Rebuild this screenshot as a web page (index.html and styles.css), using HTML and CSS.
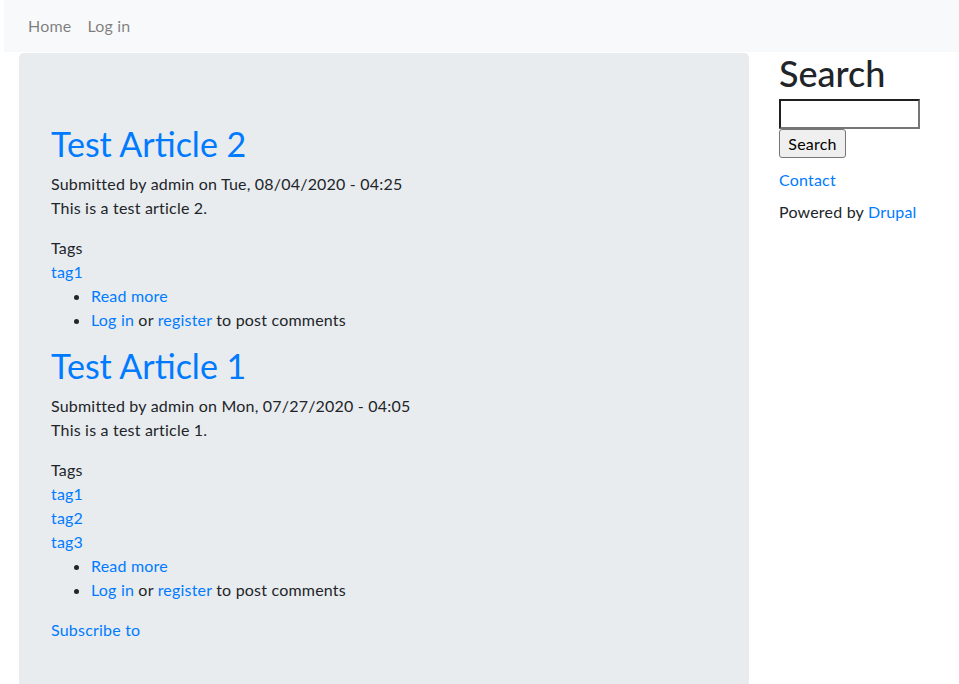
FILE: index.html
```html
<!DOCTYPE html>
<html lang="en">
<head>
<meta charset="utf-8">
<title>Drupal site</title>
<link rel="stylesheet" href="styles.css">
</head>
<body>
<nav class="navbar">
  <a class="nav-link" href="#">Home</a>
  <a class="nav-link" href="#">Log in</a>
</nav>
<div class="page">
  <main class="main">
    <article class="article">
      <h2 class="article-title"><a href="#">Test Article 2</a></h2>
      <div class="meta">Submitted by admin on Tue, 08/04/2020 - 04:25</div>
      <p class="body">This is a test article 2.</p>
      <div class="tags-label">Tags</div>
      <div class="tag"><a href="#">tag1</a></div>
      <ul class="links">
        <li><a href="#">Read more</a></li>
        <li><a href="#">Log in</a> or <a href="#">register</a> to post comments</li>
      </ul>
    </article>
    <article class="article">
      <h2 class="article-title"><a href="#">Test Article 1</a></h2>
      <div class="meta">Submitted by admin on Mon, 07/27/2020 - 04:05</div>
      <p class="body">This is a test article 1.</p>
      <div class="tags-label">Tags</div>
      <div class="tag"><a href="#">tag1</a></div>
      <div class="tag"><a href="#">tag2</a></div>
      <div class="tag"><a href="#">tag3</a></div>
      <ul class="links">
        <li><a href="#">Read more</a></li>
        <li><a href="#">Log in</a> or <a href="#">register</a> to post comments</li>
      </ul>
    </article>
    <a class="feed" href="#">Subscribe to</a>
  </main>
  <aside class="sidebar">
    <h2 class="side-title">Search</h2>
    <form class="search-form">
      <input class="search-input" type="search">
      <button class="search-btn" type="button">Search</button>
    </form>
    <div class="side-link"><a href="#">Contact</a></div>
    <div class="powered">Powered by <a href="#">Drupal</a></div>
  </aside>
</div>
</body>
</html>
```
FILE: styles.css
```css
html, body {
  margin: 0;
  padding: 0;
}
body {
  font-family: "Lato", "Liberation Sans", sans-serif;
  font-size: 16px;
  letter-spacing: 0.2px;
  line-height: 24px;
  color: #212529;
  background: #fff;
}
a {
  color: #007bff;
  text-decoration: none;
}
.navbar {
  margin-left: 4px;
  height: 52px;
  background: #f8f9fa;
  display: flex;
  align-items: center;
  padding: 0 16px;
}
.nav-link {
  color: rgba(0, 0, 0, 0.5);
  padding: 0 8px;
}
.page {
  display: flex;
  align-items: flex-start;
  padding-left: 19px;
  margin-top: 1px;
}
.main {
  width: 730px;
  box-sizing: border-box;
  min-height: 640px;
  background: #e9ecef;
  border-radius: 5px 5px 0 0;
  padding: 67px 32px 40px;
}
.article-title {
  margin: 0 0 4px;
  font-size: 34px;
  line-height: 48px;
  font-weight: 400;
  letter-spacing: 0;
}
.meta {
  margin: 0;
}
.body {
  margin: 0 0 16px;
}
.links {
  margin: 0 0 10px;
  padding-left: 40px;
}
.feed {
  display: block;
  margin-top: 16px;
}
.sidebar {
  padding-left: 30px;
}
.side-title {
  margin: 0 0 6px;
  font-size: 36px;
  line-height: 40px;
  font-weight: 500;
  letter-spacing: 0;
}
.search-form {
  display: flex;
  flex-direction: column;
  align-items: flex-start;
}
.search-input {
  width: 141px;
  height: 30px;
  box-sizing: border-box;
  border-width: 2px;
  border-style: solid;
  border-color: #1f1f1f #767676 #767676 #1f1f1f;
  background: #fff;
  margin: 0;
}
.search-btn {
  width: 67px;
  height: 29px;
  box-sizing: border-box;
  font-family: inherit;
  font-size: 16px;
  letter-spacing: 0.2px;
  color: #000;
  background: #efefef;
  border: 1px solid #767676;
  border-radius: 3px;
  padding: 0;
  margin: 0;
}
.side-link {
  margin-top: 10px;
}
.powered {
  margin-top: 8px;
}
```
